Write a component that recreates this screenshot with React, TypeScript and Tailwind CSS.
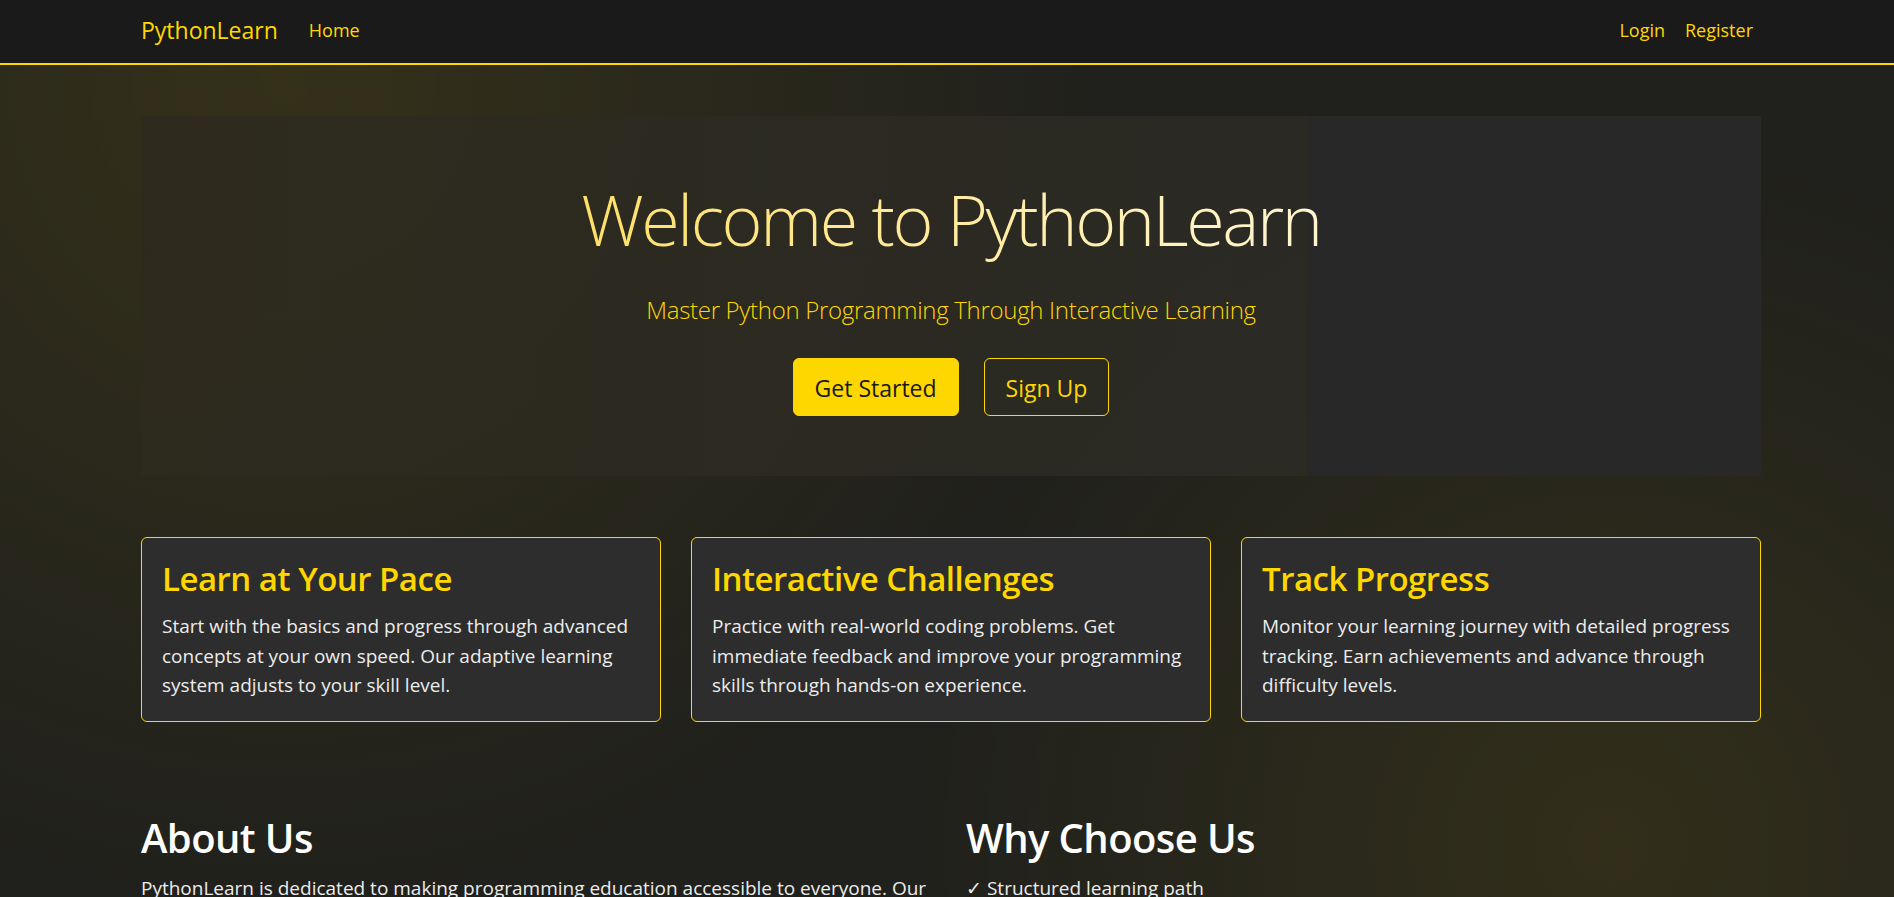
import React from 'react';

const features = [
  {
    title: 'Learn at Your Pace',
    text: 'Start with the basics and progress through advanced concepts at your own speed. Our adaptive learning system adjusts to your skill level.',
  },
  {
    title: 'Interactive Challenges',
    text: 'Practice with real-world coding problems. Get immediate feedback and improve your programming skills through hands-on experience.',
  },
  {
    title: 'Track Progress',
    text: 'Monitor your learning journey with detailed progress tracking. Earn achievements and advance through difficulty levels.',
  },
];

const reasons = [
  'Structured learning path',
  'Hands-on coding exercises',
  'Instant feedback on solutions',
  'Progress tracking and achievements',
];

export default function App() {
  return (
    <div className="min-h-screen bg-[#20201c] bg-[radial-gradient(circle_at_15%_8%,rgba(255,215,0,0.09),transparent_45%),radial-gradient(circle_at_85%_80%,rgba(255,215,0,0.08),transparent_40%)] font-['Open_Sans','Noto_Sans',sans-serif] text-white">
      {/* navbar */}
      <nav className="h-[65px] border-b-2 border-[#ffd700] bg-[#1a1a1a]">
        <div className="ml-[141px] flex h-full w-[1620px] items-center pb-[3px]">
          <a className="mr-[23px] text-[23px] text-[#ffd700]">PythonLearn</a>
          <a className="px-2 text-[18px] text-[#ffd700]">Home</a>
          <div className="ml-auto flex gap-1">
            <a className="px-2 text-[18px] text-[#ffd700]">Login</a>
            <a className="px-2 text-[18px] text-[#ffd700]">Register</a>
          </div>
        </div>
      </nav>

      <main className="ml-[141px] w-[1620px]">
        {/* hero */}
        <section className="mt-[51px] flex flex-col items-center bg-[linear-gradient(90deg,rgba(45,42,30,0.85)_0%,rgba(44,43,37,0.85)_72%,#282828_72%,#282828_100%)] py-[60px]">
          <h1 className="mb-[30px] bg-gradient-to-r from-[#ffe066] to-[#fff6d0] bg-clip-text text-[70px] leading-[86px] font-light tracking-[-2.4px] text-transparent">
            Welcome to PythonLearn
          </h1>
          <p className="mb-[30px] text-[24px] leading-[36px] font-light tracking-[-0.3px] text-[#ffd700]">
            Master Python Programming Through Interactive Learning
          </p>
          <div className="flex gap-[25px]">
            <button className="h-[58px] rounded-md border border-[#ffd700] bg-[#ffd700] px-[21px] pt-[3px] text-[23px] text-[#1a1a1a]">
              Get Started
            </button>
            <button className="h-[58px] rounded-md border border-[#ffd700] px-[21px] pt-[3px] text-[23px] text-[#ffd700]">
              Sign Up
            </button>
          </div>
        </section>

        {/* features */}
        <section className="mt-[61px] grid grid-cols-3 gap-[30px]">
          {features.map((f) => (
            <div
              key={f.title}
              className="rounded-md border border-[#ffd700] bg-[#2d2d2d] p-5"
            >
              <h3 className="mb-3 text-[33px] leading-[42px] font-semibold tracking-[-0.5px] text-[#ffd700]">
                {f.title}
              </h3>
              <p className="text-[19px] leading-[29.5px] text-[#ececec]">{f.text}</p>
            </div>
          ))}
        </section>

        {/* about */}
        <section className="mt-[92px] grid grid-cols-2 gap-[30px] pb-16">
          <div>
            <h2 className="mb-3 text-[40px] leading-[48px] font-semibold tracking-[-0.6px]">About Us</h2>
            <p className="text-[19px] leading-[29.5px] text-[#ececec]">
              PythonLearn is dedicated to making programming education accessible to everyone. Our
              platform combines structured lessons with interactive challenges to help you build
              real-world Python skills.
            </p>
          </div>
          <div>
            <h2 className="mb-3 text-[40px] leading-[48px] font-semibold tracking-[-0.6px]">Why Choose Us</h2>
            <ul className="text-[19px] leading-[29.5px] text-[#ececec]">
              {reasons.map((r) => (
                <li key={r}>✓ {r}</li>
              ))}
            </ul>
          </div>
        </section>
      </main>
    </div>
  );
}
